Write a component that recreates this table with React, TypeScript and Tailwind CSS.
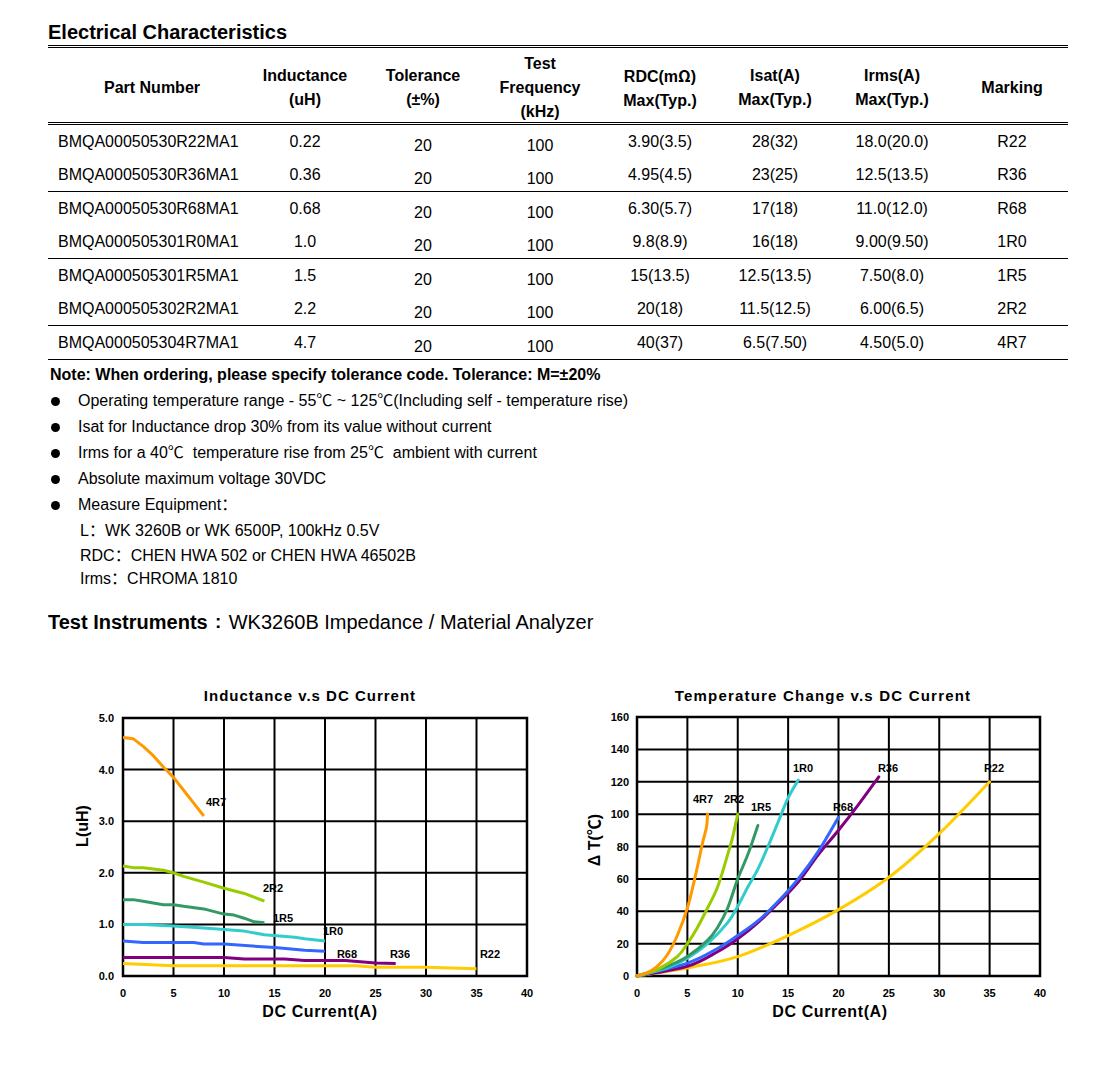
import React from 'react';

type Pt = [number, number];

const cols = 'grid grid-cols-[208px_98px_138px_96px_144px_86px_148px_92px]';

const rows = [
  ['BMQA00050530R22MA1', '0.22', '3.90(3.5)', '28(32)', '18.0(20.0)', 'R22'],
  ['BMQA00050530R36MA1', '0.36', '4.95(4.5)', '23(25)', '12.5(13.5)', 'R36'],
  ['BMQA00050530R68MA1', '0.68', '6.30(5.7)', '17(18)', '11.0(12.0)', 'R68'],
  ['BMQA000505301R0MA1', '1.0', '9.8(8.9)', '16(18)', '9.00(9.50)', '1R0'],
  ['BMQA000505301R5MA1', '1.5', '15(13.5)', '12.5(13.5)', '7.50(8.0)', '1R5'],
  ['BMQA000505302R2MA1', '2.2', '20(18)', '11.5(12.5)', '6.00(6.5)', '2R2'],
  ['BMQA000505304R7MA1', '4.7', '40(37)', '6.5(7.50)', '4.50(5.0)', '4R7'],
];

const groups = [rows.slice(0, 2), rows.slice(2, 4), rows.slice(4, 6), rows.slice(6)];

const FONT = "'Liberation Sans', Arial, 'Noto Sans CJK SC', sans-serif";

// catmull-rom to bezier, for the smooth temperature curves
function smooth(pts: Pt[]) {
  let d = `M${pts[0][0]},${pts[0][1]}`;
  for (let i = 0; i < pts.length - 1; i++) {
    const p0 = pts[i - 1] || pts[i];
    const p1 = pts[i];
    const p2 = pts[i + 1];
    const p3 = pts[i + 2] || p2;
    const c1x = p1[0] + (p2[0] - p0[0]) / 6;
    const c1y = p1[1] + (p2[1] - p0[1]) / 6;
    const c2x = p2[0] - (p3[0] - p1[0]) / 6;
    const c2y = p2[1] - (p3[1] - p1[1]) / 6;
    d += ` C${c1x},${c1y} ${c2x},${c2y} ${p2[0]},${p2[1]}`;
  }
  return d;
}

const indCurves: { color: string; pts: Pt[] }[] = [
  { color: '#ff9900', pts: [[0, 4.62], [1, 4.6], [2, 4.45], [3, 4.27], [4, 4.05], [5, 3.85], [6, 3.6], [7, 3.35], [8, 3.1]] },
  { color: '#99cc00', pts: [[0, 2.13], [1, 2.1], [2, 2.1], [4, 2.05], [5, 2.0], [6, 1.93], [8, 1.82], [10, 1.7], [12, 1.6], [14, 1.45]] },
  { color: '#339966', pts: [[0, 1.48], [1, 1.48], [2, 1.45], [4, 1.38], [5, 1.38], [6, 1.35], [8, 1.3], [10, 1.2], [11, 1.18], [12, 1.12], [13, 1.05], [14, 1.03]] },
  { color: '#33cccc', pts: [[0, 1.0], [2, 1.0], [5, 0.97], [8, 0.93], [10, 0.9], [12, 0.87], [14, 0.8], [17, 0.75], [18, 0.72], [20, 0.68]] },
  { color: '#3366ff', pts: [[0, 0.68], [2, 0.65], [5, 0.65], [7, 0.65], [8, 0.62], [10, 0.62], [15, 0.55], [18, 0.5], [20, 0.48]] },
  { color: '#800080', pts: [[0, 0.36], [10, 0.36], [12, 0.33], [16, 0.33], [18, 0.3], [22, 0.3], [25, 0.25], [27, 0.24]] },
  { color: '#ffcc00', pts: [[0, 0.24], [5, 0.2], [10, 0.2], [20, 0.2], [23, 0.2], [25, 0.17], [30, 0.17], [35, 0.14]] },
];

const tempCurves: { color: string; pts: Pt[] }[] = [
  { color: '#ffcc00', pts: [[0, 0], [5, 5], [10, 12], [15, 25], [20, 41], [25, 61], [30, 88], [35, 120]] },
  { color: '#800080', pts: [[0, 0], [5, 6], [8, 15], [10, 23], [12, 33], [14, 45], [16, 58], [18, 75], [20, 90], [22, 106], [24, 123]] },
  { color: '#3366ff', pts: [[0, 0], [5, 8], [8, 17], [10, 25], [12, 34], [14, 46], [16, 60], [18, 77], [20, 98]] },
  { color: '#33cccc', pts: [[0, 0], [3, 5], [5, 11], [7, 20], [9, 33], [10, 43], [11, 55], [12, 66], [13, 80], [14, 95], [15, 110], [16, 121]] },
  { color: '#339966', pts: [[0, 0], [3, 6], [5, 12], [7, 22], [8, 30], [9, 42], [10, 60], [11, 75], [12, 93]] },
  { color: '#99cc00', pts: [[0, 0], [2, 4], [4, 12], [5, 20], [6, 30], [7, 42], [8, 55], [9, 75], [9.5, 86], [10, 100]] },
  { color: '#ff9900', pts: [[0, 0], [1, 2], [2, 6], [3, 13], [4, 25], [5, 42], [5.8, 62], [6.5, 82], [6.9, 92], [7, 100]] },
];

function InductanceChart() {
  const x0 = 123, x1 = 527, y0 = 718, y1 = 976;
  const sx = (v: number) => x0 + (v * (x1 - x0)) / 40;
  const sy = (v: number) => y1 - (v * (y1 - y0)) / 5;
  const labels: [string, number, number][] = [
    ['4R7', 216, 802], ['2R2', 273, 888], ['1R5', 283, 918], ['1R0', 333, 931],
    ['R68', 347, 954], ['R36', 400, 954], ['R22', 490, 954],
  ];
  return (
    <svg width={485} height={345} viewBox="60 680 485 345" fontFamily={FONT}>
      <text x={310} y={695} textAnchor="middle" dominantBaseline="central" fontSize={15} fontWeight="bold" letterSpacing={1}>
        Inductance v.s DC Current
      </text>
      {Array.from({ length: 9 }, (_, i) => (
        <line key={'v' + i} x1={sx(i * 5)} x2={sx(i * 5)} y1={y0} y2={y1} stroke="#000" strokeWidth={2} />
      ))}
      {Array.from({ length: 6 }, (_, j) => (
        <line key={'h' + j} x1={x0} x2={x1} y1={sy(j)} y2={sy(j)} stroke="#000" strokeWidth={2} />
      ))}
      <rect x={x0} y={y0} width={x1 - x0} height={y1 - y0} fill="none" stroke="#000" strokeWidth={2.5} />
      {Array.from({ length: 6 }, (_, j) => (
        <text key={'yl' + j} x={114} y={sy(j)} textAnchor="end" dominantBaseline="central" fontSize={11} fontWeight="bold">
          {j.toFixed(1)}
        </text>
      ))}
      {Array.from({ length: 9 }, (_, i) => (
        <text key={'xl' + i} x={sx(i * 5)} y={993} textAnchor="middle" dominantBaseline="central" fontSize={11} fontWeight="bold">
          {i * 5}
        </text>
      ))}
      {indCurves.map((c, k) => (
        <polyline
          key={k}
          points={c.pts.map(([x, y]) => `${sx(x)},${sy(y)}`).join(' ')}
          fill="none"
          stroke={c.color}
          strokeWidth={3}
          strokeLinejoin="round"
        />
      ))}
      {labels.map(([t, x, y]) => (
        <text key={t} x={x} y={y} textAnchor="middle" dominantBaseline="central" fontSize={11} fontWeight="bold">
          {t}
        </text>
      ))}
      <text x={320} y={1011} textAnchor="middle" dominantBaseline="central" fontSize={16} fontWeight="bold" letterSpacing={0.6}>
        DC Current(A)
      </text>
      <text x={82} y={826} textAnchor="middle" dominantBaseline="central" fontSize={16} fontWeight="bold" transform="rotate(-90 82 826)">
        L(uH)
      </text>
    </svg>
  );
}

function TemperatureChart() {
  const x0 = 637, x1 = 1040, y0 = 717, y1 = 976;
  const sx = (v: number) => x0 + (v * (x1 - x0)) / 40;
  const sy = (v: number) => y1 - (v * (y1 - y0)) / 160;
  const labels: [string, number, number][] = [
    ['1R0', 803, 768], ['R36', 888, 768], ['R22', 994, 768], ['4R7', 703, 799],
    ['2R2', 734, 799], ['1R5', 761, 807], ['R68', 843, 807],
  ];
  return (
    <svg width={490} height={345} viewBox="575 680 490 345" fontFamily={FONT}>
      <text x={823} y={695} textAnchor="middle" dominantBaseline="central" fontSize={15} fontWeight="bold" letterSpacing={1.2}>
        Temperature Change v.s DC Current
      </text>
      {Array.from({ length: 9 }, (_, i) => (
        <line key={'v' + i} x1={sx(i * 5)} x2={sx(i * 5)} y1={y0} y2={y1} stroke="#000" strokeWidth={2} />
      ))}
      {Array.from({ length: 9 }, (_, j) => (
        <line key={'h' + j} x1={x0} x2={x1} y1={sy(j * 20)} y2={sy(j * 20)} stroke="#000" strokeWidth={2} />
      ))}
      <rect x={x0} y={y0} width={x1 - x0} height={y1 - y0} fill="none" stroke="#000" strokeWidth={2.5} />
      {Array.from({ length: 9 }, (_, j) => (
        <text key={'yl' + j} x={629} y={sy(j * 20)} textAnchor="end" dominantBaseline="central" fontSize={11} fontWeight="bold">
          {j * 20}
        </text>
      ))}
      {Array.from({ length: 9 }, (_, i) => (
        <text key={'xl' + i} x={sx(i * 5)} y={993} textAnchor="middle" dominantBaseline="central" fontSize={11} fontWeight="bold">
          {i * 5}
        </text>
      ))}
      {tempCurves.map((c, k) => (
        <path
          key={k}
          d={smooth(c.pts.map(([x, y]) => [sx(x), sy(y)] as Pt))}
          fill="none"
          stroke={c.color}
          strokeWidth={3}
          strokeLinecap="round"
        />
      ))}
      {labels.map(([t, x, y]) => (
        <text key={t} x={x} y={y} textAnchor="middle" dominantBaseline="central" fontSize={11} fontWeight="bold">
          {t}
        </text>
      ))}
      <text x={830} y={1011} textAnchor="middle" dominantBaseline="central" fontSize={16} fontWeight="bold" letterSpacing={0.6}>
        DC Current(A)
      </text>
      <text x={594} y={840} textAnchor="middle" dominantBaseline="central" fontSize={16} fontWeight="bold" transform="rotate(-90 594 840)">
        Δ T(℃)
      </text>
    </svg>
  );
}

const App: React.FC = () => {
  return (
    <div className="min-h-[1066px] bg-white text-black font-['Liberation_Sans',Arial,'Noto_Sans_CJK_SC',sans-serif]">
      <div className="pl-[48px] pt-[20px]">
        <div className="text-[20px] font-bold leading-[24px]">Electrical Characteristics</div>

        {/* table */}
        <div className="mt-[1px] w-[1020px] border-t-[3px] border-double border-black">
          <div className={`${cols} h-[77px] pt-[4px] items-center text-center text-[16px] font-bold leading-[24px] border-b-[3px] border-double border-black`}>
            <div>Part Number</div>
            <div>Inductance<br />(uH)</div>
            <div>Tolerance<br />(±%)</div>
            <div>Test<br />Frequency<br />(kHz)</div>
            <div>RDC(m<span className="font-['Noto_Sans_CJK_SC']">Ω</span>)<br />Max(Typ.)</div>
            <div>Isat(A)<br />Max(Typ.)</div>
            <div>Irms(A)<br />Max(Typ.)</div>
            <div>Marking</div>
          </div>
          {groups.map((g, gi) => (
            <div key={gi} className="border-b border-black">
              {g.map((r) => (
                <div key={r[0]} className={`${cols} h-[33px] items-center text-[16px] leading-[20px] text-center`}>
                  <div className="pl-[10px] text-left">{r[0]}</div>
                  <div>{r[1]}</div>
                  <div className="pt-[8px]">20</div>
                  <div className="pt-[8px]">100</div>
                  <div>{r[2]}</div>
                  <div>{r[3]}</div>
                  <div>{r[4]}</div>
                  <div>{r[5]}</div>
                </div>
              ))}
            </div>
          ))}
        </div>

        {/* notes */}
        <div className="mt-[2px] text-[16px] leading-[26px]">
          <div className="font-bold pl-[2px]">Note: When ordering, please specify tolerance code. Tolerance: M=±20%</div>
          {[
            'Operating temperature range - 55℃ ~ 125℃(Including self - temperature rise)',
            'Isat for Inductance drop 30% from its value without current',
            'Irms for a 40℃  temperature rise from 25℃  ambient with current',
            'Absolute maximum voltage 30VDC',
            'Measure Equipment：',
          ].map((t) => (
            <div key={t} className="flex items-center whitespace-pre">
              <span className="ml-[3px] mr-[18px] h-[9px] w-[9px] rounded-full bg-black" />
              <span>{t}</span>
            </div>
          ))}
          <div className="pl-[32px]">L：WK 3260B or WK 6500P, 100kHz 0.5V</div>
          <div className="pl-[32px] leading-[24px]">RDC：CHEN HWA 502 or CHEN HWA 46502B</div>
          <div className="pl-[32px] leading-[22px]">Irms：CHROMA 1810</div>
        </div>

        <div className="mt-[18px] flex items-center leading-[28px]">
          <span className="text-[20px] font-bold">Test Instruments</span>
          <span className="inline-block w-[21px] text-center text-[19px] font-bold">:</span>
          <span className="text-[20px]">WK3260B Impedance / Material Analyzer</span>
        </div>

        {/* charts */}
        <div className="mt-[44px] ml-[12px] flex gap-[30px]">
          <InductanceChart />
          <TemperatureChart />
        </div>
      </div>
    </div>
  );
};

export default App;
